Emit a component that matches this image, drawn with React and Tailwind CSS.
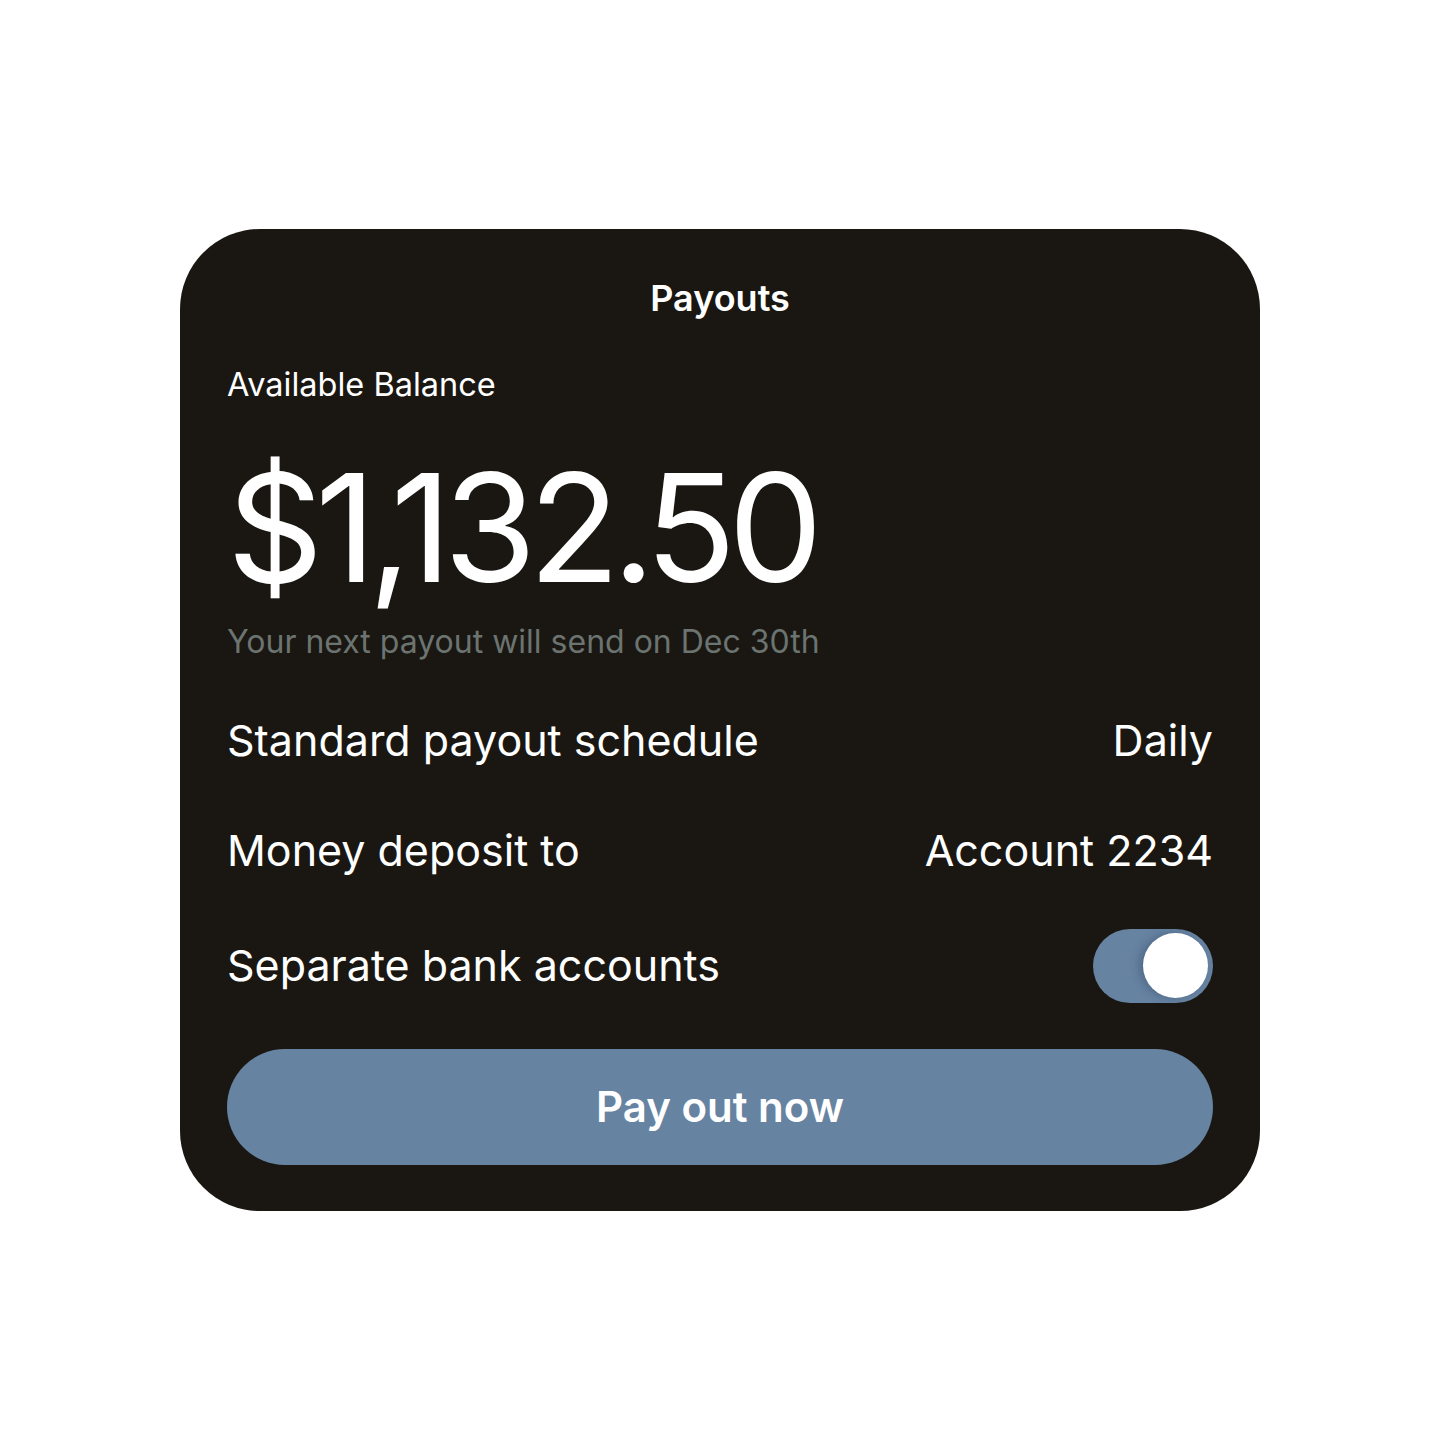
import { useState } from 'react';

function Toggle({ on, onChange }) {
  return (
    <button
      onClick={() => onChange(!on)}
      className={
        on
          ? 'flex h-[74px] w-[120px] items-center justify-end rounded-full bg-[#6783a2] px-[5px]'
          : 'flex h-[74px] w-[120px] items-center justify-start rounded-full bg-[#3a3832] px-[5px]'
      }
    >
      <span className="block h-[65px] w-[65px] rounded-full bg-white shadow-[-4px_0_8px_rgba(40,60,90,0.35)]" />
    </button>
  );
}

export default function App() {
  const [separate, setSeparate] = useState(true);

  return (
    <div className="flex min-h-[1440px] w-full items-start justify-center bg-white pt-[229px] font-['Inter',sans-serif]">
      <div className="flex w-[1080px] flex-col rounded-[80px] bg-[#1a1712] px-[47px] pb-[46px] pt-[51px] text-white">
        <h1 className="text-center text-[36px] font-semibold leading-none">Payouts</h1>

        <p className="mt-[53px] text-[32.5px] leading-none">Available Balance</p>
        <p className="mt-[51px] text-[150px] leading-none tracking-[-0.053em]">$1,132.50</p>
        <p className="mt-[23px] text-[32px] leading-none text-[#6b7470]">
          Your next payout will send on Dec 30th
        </p>

        <div className="mt-[61px] flex items-center justify-between text-[43px] leading-none">
          <span>Standard payout schedule</span>
          <span>Daily</span>
        </div>
        <div className="mt-[67px] flex items-center justify-between text-[43px] leading-none">
          <span>Money deposit to</span>
          <span>Account 2234</span>
        </div>
        <div className="mt-[57px] flex items-center justify-between text-[43px] leading-none">
          <span>Separate bank accounts</span>
          <Toggle on={separate} onChange={setSeparate} />
        </div>

        <button className="mt-[46px] h-[116px] w-full rounded-full bg-[#6783a2] text-[42px] font-semibold leading-none text-white">
          Pay out now
        </button>
      </div>
    </div>
  );
}
